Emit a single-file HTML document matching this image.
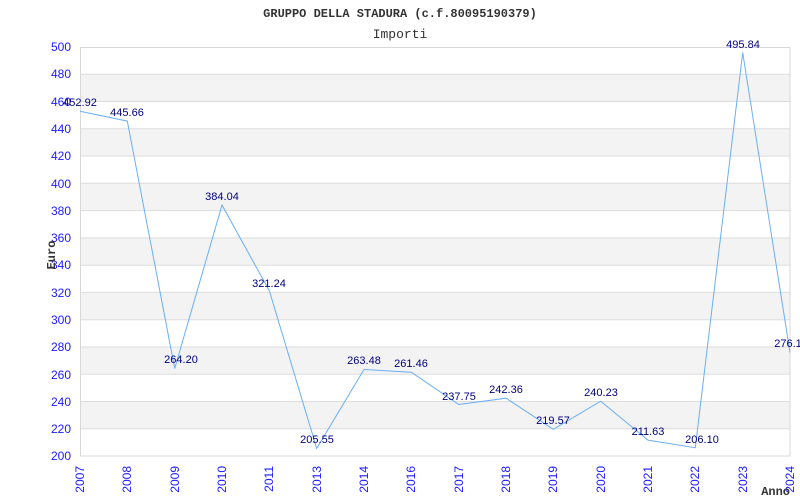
<!DOCTYPE html>
<html><head><meta charset="utf-8"><style>html,body{margin:0;padding:0;background:#fff}svg{display:block}</style></head><body>
<svg width="800" height="500" xmlns="http://www.w3.org/2000/svg">
<rect width="800" height="500" fill="#fff"/>
<text x="400" y="17" text-anchor="middle" font-family="Liberation Mono, monospace" font-weight="bold" font-size="12" fill="#333">GRUPPO DELLA STADURA (c.f.80095190379)</text>
<text x="400" y="38" text-anchor="middle" font-family="Liberation Mono, monospace" font-size="13" fill="#333">Importi</text>
<g fill="#f3f3f3">
<rect x="80" y="74.3" width="710" height="27.3"/>
<rect x="80" y="128.8" width="710" height="27.3"/>
<rect x="80" y="183.3" width="710" height="27.3"/>
<rect x="80" y="237.9" width="710" height="27.3"/>
<rect x="80" y="292.4" width="710" height="27.3"/>
<rect x="80" y="347" width="710" height="27.3"/>
<rect x="80" y="401.5" width="710" height="27.3"/>
</g>
<g stroke="#ddd" stroke-width="1">
<line x1="80" x2="790" y1="74.3" y2="74.3"/><line x1="80" x2="790" y1="101.5" y2="101.5"/>
<line x1="80" x2="790" y1="128.8" y2="128.8"/><line x1="80" x2="790" y1="156.1" y2="156.1"/>
<line x1="80" x2="790" y1="183.3" y2="183.3"/><line x1="80" x2="790" y1="210.6" y2="210.6"/>
<line x1="80" x2="790" y1="237.9" y2="237.9"/><line x1="80" x2="790" y1="265.2" y2="265.2"/>
<line x1="80" x2="790" y1="292.4" y2="292.4"/><line x1="80" x2="790" y1="319.7" y2="319.7"/>
<line x1="80" x2="790" y1="347" y2="347"/><line x1="80" x2="790" y1="374.2" y2="374.2"/>
<line x1="80" x2="790" y1="401.5" y2="401.5"/><line x1="80" x2="790" y1="428.8" y2="428.8"/>
</g>
<rect x="80.5" y="47.5" width="709.5" height="408.5" fill="none" stroke="#d8d8d8"/>
<g font-family="Liberation Sans, sans-serif" font-size="12" fill="#1a1aff" text-anchor="end">
<text x="71" y="51">500</text><text x="71" y="78">480</text><text x="71" y="106">460</text>
<text x="71" y="133">440</text><text x="71" y="160">420</text><text x="71" y="188">400</text>
<text x="71" y="215">380</text><text x="71" y="242">360</text><text x="71" y="269">340</text>
<text x="71" y="297">320</text><text x="71" y="324">300</text><text x="71" y="351">280</text>
<text x="71" y="379">260</text><text x="71" y="406">240</text><text x="71" y="433">220</text>
<text x="71" y="460">200</text>
</g>
<g font-family="Liberation Sans, sans-serif" font-size="12" fill="#1a1aff" text-anchor="end">
<text transform="translate(84,466) rotate(-90)">2007</text>
<text transform="translate(131,466) rotate(-90)">2008</text>
<text transform="translate(179,466) rotate(-90)">2009</text>
<text transform="translate(226,466) rotate(-90)">2010</text>
<text transform="translate(273,466) rotate(-90)">2011</text>
<text transform="translate(321,466) rotate(-90)">2013</text>
<text transform="translate(368,466) rotate(-90)">2014</text>
<text transform="translate(415,466) rotate(-90)">2016</text>
<text transform="translate(463,466) rotate(-90)">2017</text>
<text transform="translate(510,466) rotate(-90)">2018</text>
<text transform="translate(557,466) rotate(-90)">2019</text>
<text transform="translate(605,466) rotate(-90)">2020</text>
<text transform="translate(652,466) rotate(-90)">2021</text>
<text transform="translate(699,466) rotate(-90)">2022</text>
<text transform="translate(747,466) rotate(-90)">2023</text>
<text transform="translate(794,466) rotate(-90)">2024</text>
</g>
<text transform="translate(55,255) rotate(-90)" text-anchor="middle" font-family="Liberation Mono, monospace" font-weight="bold" font-size="12" fill="#333">Euro</text>
<text x="790" y="495" text-anchor="end" font-family="Liberation Mono, monospace" font-weight="bold" font-size="12" fill="#333">Anno</text>
<polyline fill="none" stroke="#6aaff5" stroke-width="1" points="80,111.2 127.3,121.1 174.7,368.5 222,205.1 269.3,290.7 316.7,448.4 364,369.5 411.3,372.2 458.7,404.5 506,398.2 553.3,429.3 600.7,401.2 648,440.1 695.3,447.7 742.7,52.7 790,352.5"/>
<g font-family="Liberation Sans, sans-serif" font-size="11" fill="#000080" text-anchor="middle">
<text x="80" y="106">452.92</text>
<text x="127" y="116">445.66</text>
<text x="181" y="363">264.20</text>
<text x="222" y="200">384.04</text>
<text x="269" y="287">321.24</text>
<text x="317" y="443">205.55</text>
<text x="364" y="364">263.48</text>
<text x="411" y="367">261.46</text>
<text x="459" y="400">237.75</text>
<text x="506" y="393">242.36</text>
<text x="553" y="424">219.57</text>
<text x="601" y="396">240.23</text>
<text x="648" y="435">211.63</text>
<text x="702" y="443">206.10</text>
<text x="743" y="48">495.84</text>
<text x="788" y="347">276.1</text>
</g>
</svg>
</body></html>
